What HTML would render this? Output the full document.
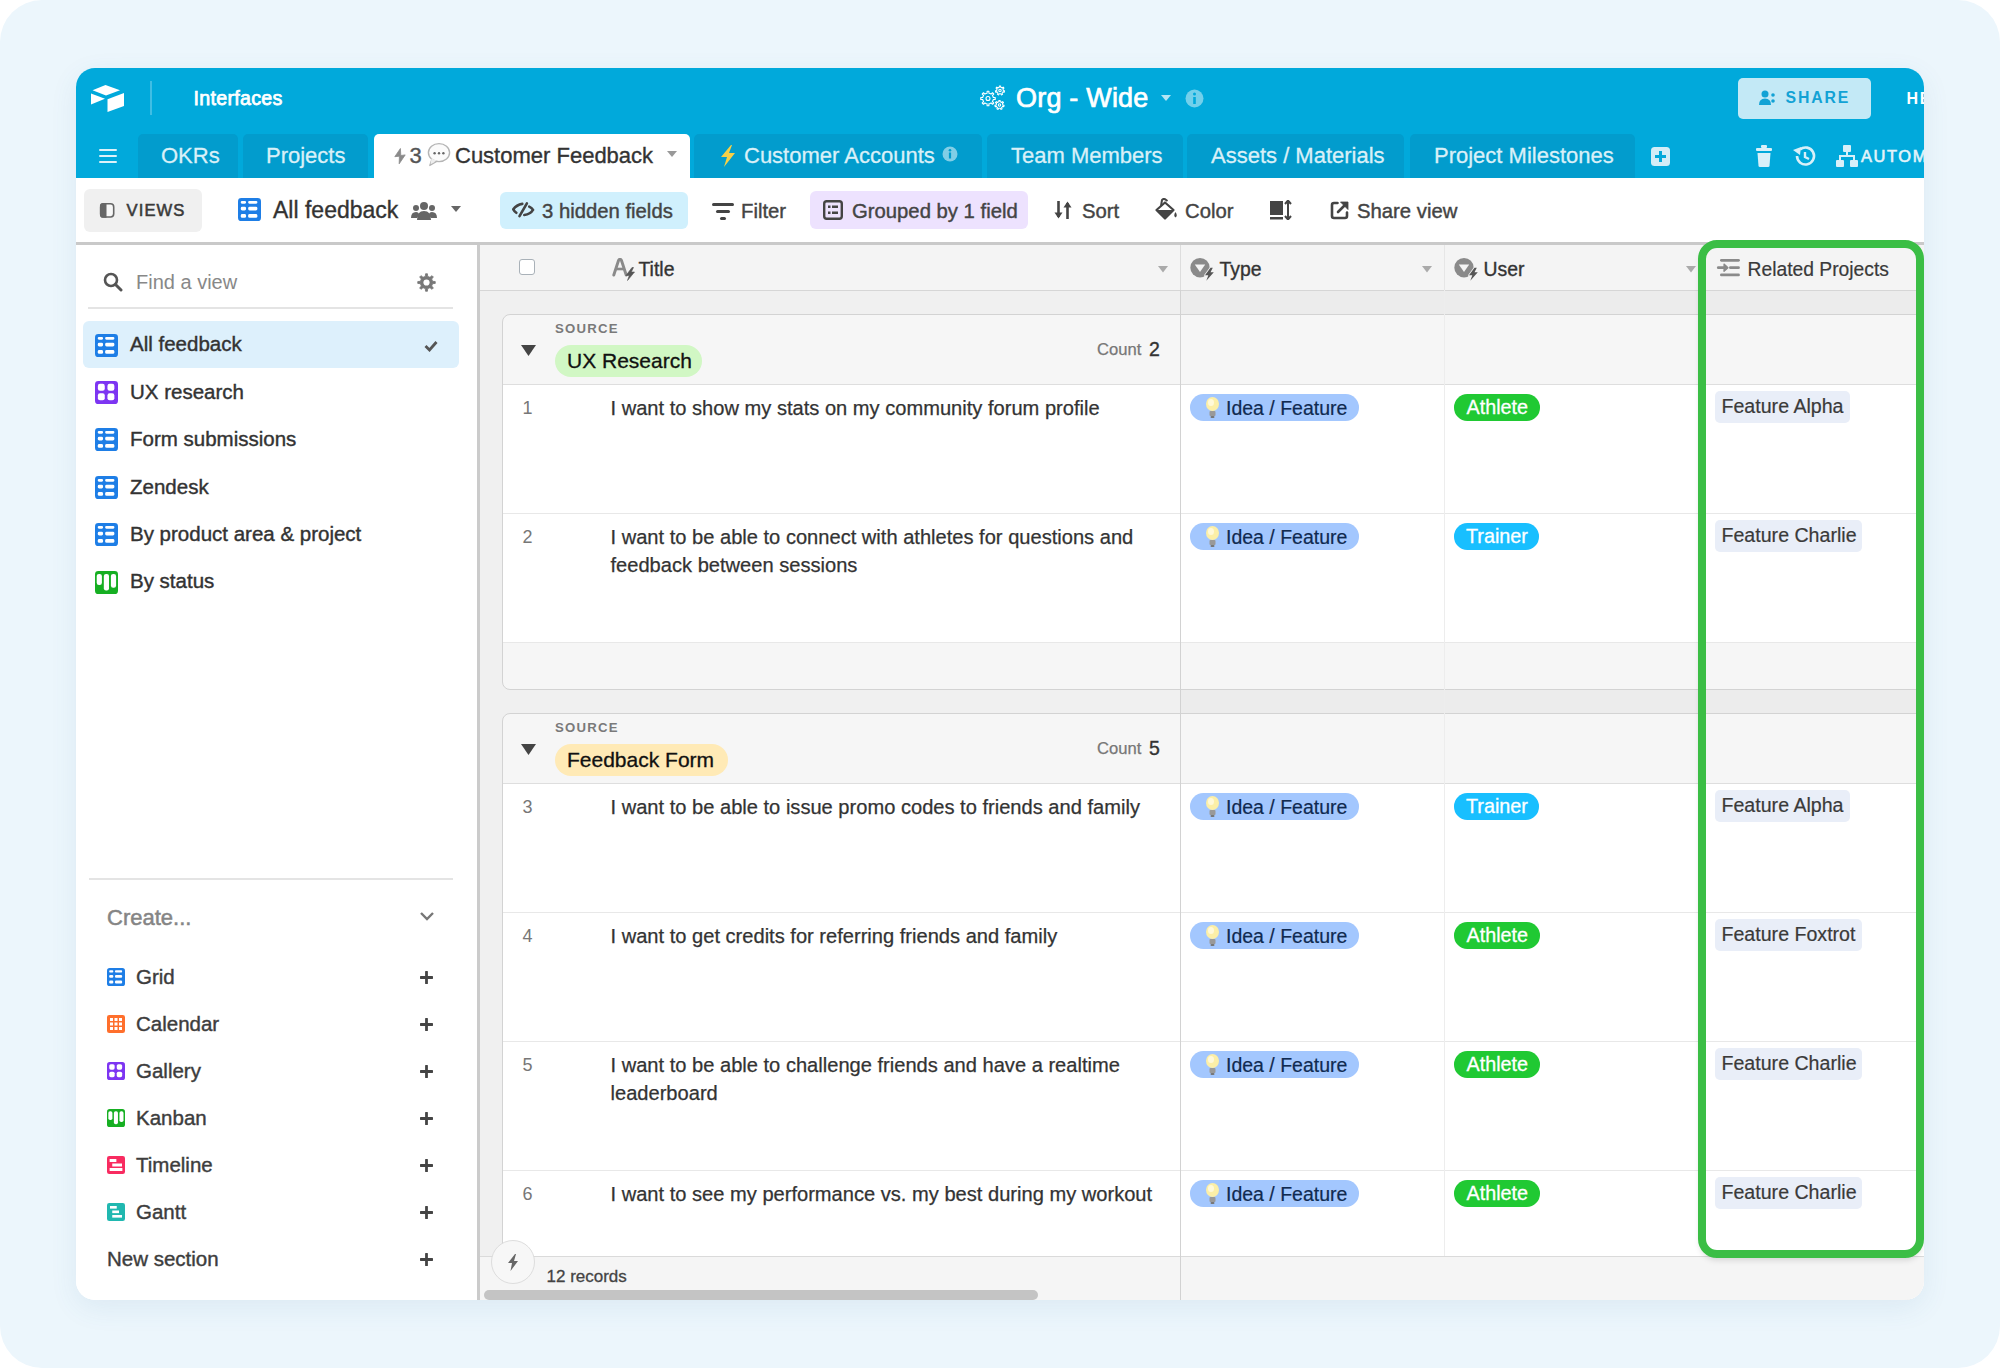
<!DOCTYPE html>
<html><head><meta charset="utf-8"><style>
html,body{margin:0;padding:0;background:#fff;}
body{width:2000px;height:1368px;position:relative;overflow:hidden;font-family:"Liberation Sans", sans-serif;}
.bg{position:absolute;left:0;top:0;width:2000px;height:1368px;background:#ECF6FC;border-radius:42px;}
.win{position:absolute;left:76px;top:68px;width:1848px;height:1232px;border-radius:19px;overflow:hidden;box-shadow:0 8px 28px rgba(60,110,150,0.09);background:#fff;}
.in{position:absolute;left:-76px;top:-68px;width:2000px;height:1368px;}
.t{position:absolute;white-space:nowrap;}
</style></head><body>
<div class="bg"></div>
<div class="win"><div class="in">
<div style="position:absolute;left:76px;top:68px;width:1848px;height:110px;background:#01A9DB;"></div>
<svg style="position:absolute;left:91px;top:84px;" width="34" height="28" viewBox="0 0 34 28"><path d="M14.5 1 L29 6.2 L15 11.5 L1.5 6.2 Z" fill="#fff"/><path d="M0 9.5 L14 14.8 L0 20.5 Z" fill="#fff"/><path d="M16.5 15.2 L33 9 L33 22 L16.5 28 Z" fill="#fff"/></svg>
<div style="position:absolute;left:150px;top:81px;width:2px;height:34px;background:rgba(255,255,255,0.25);"></div>
<div class="t" style="left:193.50px;top:89.11px;font-size:19.6px;line-height:19.6px;color:#fff;font-weight:400;letter-spacing:0.3px;-webkit-text-stroke:0.75px #fff;">Interfaces</div>
<svg style="position:absolute;left:980px;top:85px;" width="26" height="25" viewBox="0 0 26 25"><g fill="none" stroke="#fff" stroke-width="1.1" stroke-linejoin="round"><path d="M5.93 8.51 L7.05 8.18 L7.10 6.26 L8.90 6.26 L8.95 8.18 L10.07 8.51 L11.09 9.07 L12.49 7.74 L13.76 9.01 L12.43 10.41 L12.99 11.43 L13.32 12.55 L15.24 12.60 L15.24 14.40 L13.32 14.45 L12.99 15.57 L12.43 16.59 L13.76 17.99 L12.49 19.26 L11.09 17.93 L10.07 18.49 L8.95 18.82 L8.90 20.74 L7.10 20.74 L7.05 18.82 L5.93 18.49 L4.91 17.93 L3.51 19.26 L2.24 17.99 L3.57 16.59 L3.01 15.57 L2.68 14.45 L0.76 14.40 L0.76 12.60 L2.68 12.55 L3.01 11.43 L3.57 10.41 L2.24 9.01 L3.51 7.74 L4.91 9.07 Z"/><circle cx="8" cy="13.5" r="2"/><path d="M18.57 2.53 L19.34 2.27 L19.35 0.95 L20.65 0.95 L20.66 2.27 L21.43 2.53 L22.11 2.97 L23.16 2.15 L23.96 3.17 L22.94 4.00 L23.22 4.77 L23.30 5.57 L24.58 5.88 L24.30 7.15 L23.00 6.86 L22.58 7.56 L22.00 8.13 L22.56 9.32 L21.39 9.88 L20.81 8.70 L20.00 8.80 L19.19 8.70 L18.61 9.88 L17.44 9.32 L18.00 8.13 L17.42 7.56 L17.00 6.86 L15.70 7.15 L15.42 5.88 L16.70 5.57 L16.78 4.77 L17.06 4.00 L16.04 3.17 L16.84 2.15 L17.89 2.97 Z"/><circle cx="20" cy="5.5" r="1.2"/><path d="M18.07 17.03 L18.84 16.77 L18.85 15.45 L20.15 15.45 L20.16 16.77 L20.93 17.03 L21.61 17.47 L22.66 16.65 L23.46 17.67 L22.44 18.50 L22.72 19.27 L22.80 20.07 L24.08 20.38 L23.80 21.65 L22.50 21.36 L22.08 22.06 L21.50 22.63 L22.06 23.82 L20.89 24.38 L20.31 23.20 L19.50 23.30 L18.69 23.20 L18.11 24.38 L16.94 23.82 L17.50 22.63 L16.92 22.06 L16.50 21.36 L15.20 21.65 L14.92 20.38 L16.20 20.07 L16.28 19.27 L16.56 18.50 L15.54 17.67 L16.34 16.65 L17.39 17.47 Z"/><circle cx="19.5" cy="20" r="1.2"/></g></svg>
<div class="t" style="left:1016.00px;top:85.44px;font-size:27px;line-height:27px;color:#fff;font-weight:400;letter-spacing:0.2px;-webkit-text-stroke:0.7px #fff;">Org - Wide</div>
<svg style="position:absolute;left:1161px;top:95px;" width="10" height="7" viewBox="0 0 10 7"><path d="M0 0 L10 0 L5 6 Z" fill="rgba(255,255,255,0.7)"/></svg>
<svg style="position:absolute;left:1185px;top:89px;" width="19" height="19" viewBox="0 0 19 19"><circle cx="9.5" cy="9.5" r="9" fill="rgba(255,255,255,0.45)"/><rect x="8.2" y="8" width="2.6" height="7" fill="#01A9DB"/><circle cx="9.5" cy="5" r="1.5" fill="#01A9DB"/></svg>
<div style="position:absolute;left:1738px;top:78px;width:133px;height:40.5px;background:#C3E9F6;border-radius:5px;"></div>
<svg style="position:absolute;left:1759px;top:90px;" width="18" height="16" viewBox="0 0 18 16"><circle cx="6" cy="4" r="3.5" fill="#12A2D5"/><path d="M0 15 Q0 8.5 6 8.5 Q12 8.5 12 15 Z" fill="#12A2D5"/><circle cx="14" cy="5" r="1.8" fill="#12A2D5"/><circle cx="14" cy="11" r="1.8" fill="#12A2D5"/></svg>
<div class="t" style="left:1785.50px;top:90.43px;font-size:15.8px;line-height:15.8px;color:#12A2D5;font-weight:700;letter-spacing:1.9px;">SHARE</div>
<div class="t" style="left:1906.50px;top:91.26px;font-size:16px;line-height:16px;color:#fff;font-weight:700;letter-spacing:1.8px;">HE</div>
<div style="position:absolute;left:99px;top:149.2px;width:17.5px;height:2.3px;background:#DDF2F9;border-radius:1.2px;"></div>
<div style="position:absolute;left:99px;top:155.1px;width:17.5px;height:2.3px;background:#DDF2F9;border-radius:1.2px;"></div>
<div style="position:absolute;left:99px;top:161.0px;width:17.5px;height:2.3px;background:#DDF2F9;border-radius:1.2px;"></div>
<div style="position:absolute;left:138px;top:134px;width:100px;height:44px;background:#029CCD;border-radius:5px 5px 0 0;"></div>
<div style="position:absolute;left:243px;top:134px;width:125px;height:44px;background:#029CCD;border-radius:5px 5px 0 0;"></div>
<div style="position:absolute;left:374px;top:134px;width:316px;height:44px;background:#fff;border-radius:5px 5px 0 0;"></div>
<div style="position:absolute;left:694px;top:134px;width:288px;height:44px;background:#029CCD;border-radius:5px 5px 0 0;"></div>
<div style="position:absolute;left:987px;top:134px;width:196px;height:44px;background:#029CCD;border-radius:5px 5px 0 0;"></div>
<div style="position:absolute;left:1187px;top:134px;width:217px;height:44px;background:#029CCD;border-radius:5px 5px 0 0;"></div>
<div style="position:absolute;left:1410px;top:134px;width:225px;height:44px;background:#029CCD;border-radius:5px 5px 0 0;"></div>
<div class="t" style="left:161.00px;top:144.68px;font-size:22px;line-height:22px;color:#D9F0F8;font-weight:400;letter-spacing:0px;-webkit-text-stroke:0.3px #D9F0F8;">OKRs</div>
<div class="t" style="left:266.00px;top:144.68px;font-size:22px;line-height:22px;color:#D9F0F8;font-weight:400;letter-spacing:0px;-webkit-text-stroke:0.3px #D9F0F8;">Projects</div>
<svg style="position:absolute;left:394px;top:148px;" width="12" height="17" viewBox="0 0 12 17"><path d="M6.4 0.5 L0.8 8.7 L5.4 8.2 L5.2 15.8 L11.2 6.9 L6.8 7.5 Z" fill="#8a8a8a" stroke="#8a8a8a" stroke-width="0.8" stroke-linejoin="round"/></svg>
<div class="t" style="left:409.50px;top:144.68px;font-size:22px;line-height:22px;color:#555;font-weight:400;letter-spacing:0px;-webkit-text-stroke:0.4px #555;">3</div>
<svg style="position:absolute;left:427px;top:142px;" width="24" height="25" viewBox="0 0 24 25"><path d="M5 17 L2.8 23.5 L10.5 19" fill="#eee" stroke="#b5b5b5" stroke-width="1.3" stroke-linejoin="round"/><ellipse cx="12" cy="10.6" rx="10.6" ry="9" fill="#fbfbfb" stroke="#b5b5b5" stroke-width="1.4"/><path d="M4.5 16.5 L3.5 22 L9.5 18.5 Z" fill="#eee"/><circle cx="7.6" cy="11.2" r="1.2" fill="#666"/><circle cx="12" cy="11.2" r="1.2" fill="#666"/><circle cx="16.4" cy="11.2" r="1.2" fill="#666"/></svg>
<div class="t" style="left:455.00px;top:144.68px;font-size:22px;line-height:22px;color:#333;font-weight:400;letter-spacing:0px;-webkit-text-stroke:0.35px #333;">Customer Feedback</div>
<svg style="position:absolute;left:667px;top:151px;" width="10" height="7" viewBox="0 0 10 7"><path d="M0 0 L10 0 L5 6 Z" fill="#999"/></svg>
<svg style="position:absolute;left:720px;top:145px;" width="16" height="22" viewBox="0 0 16 22"><path d="M11 0 L1 12 L7 12 L4 22 L15 8 L9 8 L12 0 Z" fill="#F7D046"/></svg>
<div class="t" style="left:744.00px;top:144.68px;font-size:22px;line-height:22px;color:#D9F0F8;font-weight:400;letter-spacing:0px;-webkit-text-stroke:0.3px #D9F0F8;">Customer Accounts</div>
<svg style="position:absolute;left:942px;top:146px;" width="16" height="16" viewBox="0 0 16 16"><circle cx="8" cy="8" r="7.5" fill="rgba(255,255,255,0.5)"/><rect x="6.9" y="6.5" width="2.2" height="6" fill="#029CCD"/><circle cx="8" cy="4.2" r="1.3" fill="#029CCD"/></svg>
<div class="t" style="left:1011.00px;top:144.68px;font-size:22px;line-height:22px;color:#D9F0F8;font-weight:400;letter-spacing:0px;-webkit-text-stroke:0.3px #D9F0F8;">Team Members</div>
<div class="t" style="left:1211.00px;top:144.68px;font-size:22px;line-height:22px;color:#D9F0F8;font-weight:400;letter-spacing:0px;-webkit-text-stroke:0.3px #D9F0F8;">Assets / Materials</div>
<div class="t" style="left:1434.00px;top:144.68px;font-size:22px;line-height:22px;color:#D9F0F8;font-weight:400;letter-spacing:0px;-webkit-text-stroke:0.3px #D9F0F8;">Project Milestones</div>
<svg style="position:absolute;left:1651px;top:147px;" width="19" height="19" viewBox="0 0 19 19"><rect x="0" y="0" width="19" height="19" rx="3.5" fill="#D3EDF7"/><rect x="8" y="4" width="3" height="11" fill="#01A9DB"/><rect x="4" y="8" width="11" height="3" fill="#01A9DB"/></svg>
<svg style="position:absolute;left:1756px;top:145px;" width="16" height="22" viewBox="0 0 16 22"><rect x="5" y="0" width="6" height="3" rx="1" fill="#D8F0F9"/><rect x="0" y="3" width="16" height="3" rx="1" fill="#D8F0F9"/><path d="M1.5 8 L14.5 8 L13.5 21 Q13.4 22 12 22 L4 22 Q2.6 22 2.5 21 Z" fill="#D8F0F9"/></svg>
<svg style="position:absolute;left:1792px;top:144px;" width="25" height="24" viewBox="0 0 25 24"><path d="M5 12 A8.5 8.5 0 1 0 8 5.5" fill="none" stroke="#D8F0F9" stroke-width="2.6"/><path d="M1 6 L9 3 L8 11 Z" fill="#D8F0F9"/><path d="M13 8 L13 13 L17 15" fill="none" stroke="#D8F0F9" stroke-width="2.4"/></svg>
<svg style="position:absolute;left:1836px;top:145px;" width="22" height="22" viewBox="0 0 22 22"><rect x="7" y="0" width="8" height="7" rx="1" fill="#D8F0F9"/><rect x="0" y="15" width="8" height="7" rx="1" fill="#D8F0F9"/><rect x="14" y="15" width="8" height="7" rx="1" fill="#D8F0F9"/><path d="M11 7 L11 11 M4 15 L4 11 L18 11 L18 15" fill="none" stroke="#D8F0F9" stroke-width="2"/></svg>
<div class="t" style="left:1861.00px;top:147.82px;font-size:16.4px;line-height:16.4px;color:#E3F4FA;font-weight:400;letter-spacing:1.6px;-webkit-text-stroke:0.6px #E3F4FA;">AUTOMATIONS</div>
<div style="position:absolute;left:76px;top:178px;width:1848px;height:64px;background:#fff;"></div>
<div style="position:absolute;left:76px;top:242px;width:1848px;height:3px;background:#C9C9C9;"></div>
<div style="position:absolute;left:84px;top:189px;width:118px;height:43px;background:#F0F0F0;border-radius:6px;"></div>
<svg style="position:absolute;left:99px;top:203px;" width="16" height="15" viewBox="0 0 16 15"><rect x="1.7" y="0.8" width="13" height="13.2" rx="3.2" fill="#f7f7f7" stroke="#666" stroke-width="1.6"/><path d="M4 0 L7.5 0 L7.5 14.8 L4 14.8 Q0.9 14.8 0.9 11.7 L0.9 3.1 Q0.9 0 4 0 Z" fill="#666"/></svg>
<div class="t" style="left:126.50px;top:202.95px;font-size:16.6px;line-height:16.6px;color:#3a3a3a;font-weight:400;letter-spacing:1.1px;-webkit-text-stroke:0.55px #3a3a3a;">VIEWS</div>
<svg style="position:absolute;left:238px;top:198px;" width="23" height="23" viewBox="0 0 24 24"><rect x="0" y="0" width="24" height="24" rx="3.5" fill="#1E7EE6"/><g fill="#fff"><rect x="2.9" y="3.1" width="5.5" height="2.8" rx="1.2"/><rect x="10.6" y="3.1" width="9.6" height="2.8" rx="1.2"/><rect x="2.9" y="9.2" width="5.5" height="3.9" rx="1.5"/><rect x="10.6" y="9.2" width="9.6" height="3.9" rx="1.5"/><rect x="2.9" y="16.7" width="5.5" height="4" rx="1.5"/><rect x="10.6" y="16.7" width="9.6" height="4" rx="1.5"/></g></svg>
<div class="t" style="left:273.00px;top:199.28px;font-size:23px;line-height:23px;color:#333;font-weight:400;letter-spacing:0px;-webkit-text-stroke:0.35px #333;">All feedback</div>
<svg style="position:absolute;left:411px;top:201px;" width="26" height="19" viewBox="0 0 26 19"><circle cx="13" cy="5" r="4" fill="#666"/><circle cx="5" cy="7" r="3" fill="#666"/><circle cx="21" cy="7" r="3" fill="#666"/><path d="M6 19 Q6 10 13 10 Q20 10 20 19 Z" fill="#666"/><path d="M0 17 Q0 11 5 11 Q8 11 8 14 L6 17 Z" fill="#666"/><path d="M26 17 Q26 11 21 11 Q18 11 18 14 L20 17 Z" fill="#666"/></svg>
<svg style="position:absolute;left:451px;top:206px;" width="10" height="7" viewBox="0 0 10 7"><path d="M0 0 L10 0 L5 6 Z" fill="#666"/></svg>
<div style="position:absolute;left:500px;top:192px;width:188px;height:37px;background:#D0F0FD;border-radius:6px;"></div>
<svg style="position:absolute;left:512px;top:201px;" width="23" height="18" viewBox="0 0 23 18"><g fill="none" stroke="#444" stroke-width="2.6" stroke-linecap="round"><path d="M10.3 2.9 Q4.5 3.8 1.3 8.3 Q2.4 10.4 4.3 11.8"/><path d="M14.9 2.3 L7.5 15.2"/><path d="M17.2 5.6 Q20 7 21 8.9 Q18.5 13.2 12.3 14"/></g></svg>
<div class="t" style="left:542.00px;top:201.42px;font-size:20.3px;line-height:20.3px;color:#444;font-weight:400;letter-spacing:0px;-webkit-text-stroke:0.4px #444;">3 hidden fields</div>
<svg style="position:absolute;left:712px;top:202px;" width="22" height="18" viewBox="0 0 22 18"><rect x="0" y="1" width="22" height="3" rx="1.5" fill="#444"/><rect x="4" y="8" width="14" height="3" rx="1.5" fill="#444"/><rect x="8" y="15" width="6" height="3" rx="1.5" fill="#444"/></svg>
<div class="t" style="left:741.00px;top:201.42px;font-size:20.3px;line-height:20.3px;color:#444;font-weight:400;letter-spacing:0px;-webkit-text-stroke:0.4px #444;">Filter</div>
<div style="position:absolute;left:810px;top:191px;width:218px;height:38px;background:#EDE2FE;border-radius:6px;"></div>
<svg style="position:absolute;left:823px;top:200px;" width="20" height="20" viewBox="0 0 20 20"><rect x="1.2" y="1.2" width="17.6" height="17.6" rx="2.5" fill="none" stroke="#444" stroke-width="2.4"/><rect x="5" y="5.5" width="2.5" height="2.5" fill="#444"/><rect x="9" y="5.5" width="6" height="2.5" fill="#444"/><rect x="5" y="11.5" width="2.5" height="2.5" fill="#444"/><rect x="9" y="11.5" width="6" height="2.5" fill="#444"/></svg>
<div class="t" style="left:852.00px;top:201.42px;font-size:20.3px;line-height:20.3px;color:#444;font-weight:400;letter-spacing:0px;-webkit-text-stroke:0.4px #444;">Grouped by 1 field</div>
<svg style="position:absolute;left:1054px;top:200px;" width="19" height="20" viewBox="0 0 19 20"><path d="M4.5 1 L4.5 17" stroke="#444" stroke-width="2.6"/><path d="M0.5 12.5 L4.5 18.5 L8.5 12.5 Z" fill="#444"/><path d="M13.5 19 L13.5 3" stroke="#444" stroke-width="2.6"/><path d="M9.5 7.5 L13.5 1.5 L17.5 7.5 Z" fill="#444"/></svg>
<div class="t" style="left:1082.00px;top:201.42px;font-size:20.3px;line-height:20.3px;color:#444;font-weight:400;letter-spacing:0px;-webkit-text-stroke:0.4px #444;">Sort</div>
<svg style="position:absolute;left:1155px;top:198px;" width="23" height="22" viewBox="0 0 23 22"><path d="M10 4.5 L18.5 12 L10 20.5 L1.5 12 Z" fill="none" stroke="#444" stroke-width="2.2" stroke-linejoin="round"/><path d="M1.5 12 L18.5 12 L10 20.5 Z" fill="#444"/><path d="M6 8 L7 2 Q8 0.5 10 1.2 L12.5 3" fill="none" stroke="#444" stroke-width="2"/><path d="M20.5 14 Q23 18 20.5 19.5 Q18 18 20.5 14 Z" fill="#444"/></svg>
<div class="t" style="left:1185.00px;top:201.42px;font-size:20.3px;line-height:20.3px;color:#444;font-weight:400;letter-spacing:0px;-webkit-text-stroke:0.4px #444;">Color</div>
<svg style="position:absolute;left:1270px;top:200px;" width="22" height="20" viewBox="0 0 22 20"><rect x="0" y="1" width="13" height="14" fill="#444"/><rect x="0" y="17" width="13" height="2.5" fill="#444"/><path d="M18 1 L18 19 M15 4 L18 0.5 L21 4 M15 16 L18 19.5 L21 16" fill="none" stroke="#444" stroke-width="2"/></svg>
<svg style="position:absolute;left:1330px;top:201px;" width="19" height="19" viewBox="0 0 19 19"><path d="M7.5 2 L4 2 Q2 2 2 4 L2 15 Q2 17 4 17 L15 17 Q17 17 17 15 L17 11.5" fill="none" stroke="#444" stroke-width="2.6" stroke-linecap="round"/><path d="M8 11 L14.5 4.5" stroke="#444" stroke-width="2.6" stroke-linecap="round"/><path d="M10.5 1 L18 1 L18 8.5 Z" fill="#444" stroke="#444" stroke-width="0.8" stroke-linejoin="round"/></svg>
<div class="t" style="left:1357.00px;top:201.42px;font-size:20.3px;line-height:20.3px;color:#444;font-weight:400;letter-spacing:0px;-webkit-text-stroke:0.4px #444;">Share view</div>
<div style="position:absolute;left:76px;top:245px;width:401px;height:1055px;background:#fff;"></div>
<div style="position:absolute;left:477px;top:245px;width:2.5px;height:1055px;background:#CBCBCB;"></div>
<svg style="position:absolute;left:103px;top:272px;" width="20" height="20" viewBox="0 0 20 20"><circle cx="8" cy="8" r="6" fill="none" stroke="#555" stroke-width="2.6"/><path d="M12.5 12.5 L18 18" stroke="#555" stroke-width="3" stroke-linecap="round"/></svg>
<div class="t" style="left:136.00px;top:272.47px;font-size:20px;line-height:20px;color:#888;font-weight:400;letter-spacing:0px;">Find a view</div>
<svg style="position:absolute;left:417px;top:273px;" width="19" height="19" viewBox="0 0 19 19"><path d="M7.13 3.77 L8.29 3.42 L8.55 0.75 L10.45 0.75 L10.71 3.42 L11.87 3.77 L12.94 4.34 L15.02 2.64 L16.36 3.98 L14.66 6.06 L15.23 7.13 L15.58 8.29 L18.25 8.55 L18.25 10.45 L15.58 10.71 L15.23 11.87 L14.66 12.94 L16.36 15.02 L15.02 16.36 L12.94 14.66 L11.87 15.23 L10.71 15.58 L10.45 18.25 L8.55 18.25 L8.29 15.58 L7.13 15.23 L6.06 14.66 L3.98 16.36 L2.64 15.02 L4.34 12.94 L3.77 11.87 L3.42 10.71 L0.75 10.45 L0.75 8.55 L3.42 8.29 L3.77 7.13 L4.34 6.06 L2.64 3.98 L3.98 2.64 L6.06 4.34 Z" fill="#777" stroke="#777" stroke-width="0.8" stroke-linejoin="round"/><circle cx="9.5" cy="9.5" r="3.1" fill="#fff"/></svg>
<div style="position:absolute;left:88px;top:307px;width:365px;height:2px;background:#E4E4E4;"></div>
<div style="position:absolute;left:83px;top:321px;width:376px;height:47px;background:#DDF0FC;border-radius:6px;"></div>
<svg style="position:absolute;left:95px;top:333.5px;" width="23" height="23" viewBox="0 0 24 24"><rect x="0" y="0" width="24" height="24" rx="3.5" fill="#1E7EE6"/><g fill="#fff"><rect x="2.9" y="3.1" width="5.5" height="2.8" rx="1.2"/><rect x="10.6" y="3.1" width="9.6" height="2.8" rx="1.2"/><rect x="2.9" y="9.2" width="5.5" height="3.9" rx="1.5"/><rect x="10.6" y="9.2" width="9.6" height="3.9" rx="1.5"/><rect x="2.9" y="16.7" width="5.5" height="4" rx="1.5"/><rect x="10.6" y="16.7" width="9.6" height="4" rx="1.5"/></g></svg>
<div class="t" style="left:130.00px;top:334.45px;font-size:20.5px;line-height:20.5px;color:#333;font-weight:400;letter-spacing:0px;-webkit-text-stroke:0.4px #333;">All feedback</div>
<svg style="position:absolute;left:95px;top:380.9px;" width="23" height="23" viewBox="0 0 24 24"><rect x="0" y="0" width="24" height="24" rx="3.5" fill="#7D35F2"/><g fill="#fff"><rect x="3" y="2.9" width="7.2" height="7.3" rx="2.2"/><rect x="13" y="2.9" width="7.2" height="7.3" rx="2.2"/><rect x="3" y="12.9" width="7.2" height="7.3" rx="2.2"/><rect x="13" y="12.9" width="7.2" height="7.3" rx="2.2"/></g></svg>
<div class="t" style="left:130.00px;top:381.85px;font-size:20.5px;line-height:20.5px;color:#333;font-weight:400;letter-spacing:0px;-webkit-text-stroke:0.4px #333;">UX research</div>
<svg style="position:absolute;left:95px;top:428.3px;" width="23" height="23" viewBox="0 0 24 24"><rect x="0" y="0" width="24" height="24" rx="3.5" fill="#1E7EE6"/><g fill="#fff"><rect x="2.9" y="3.1" width="5.5" height="2.8" rx="1.2"/><rect x="10.6" y="3.1" width="9.6" height="2.8" rx="1.2"/><rect x="2.9" y="9.2" width="5.5" height="3.9" rx="1.5"/><rect x="10.6" y="9.2" width="9.6" height="3.9" rx="1.5"/><rect x="2.9" y="16.7" width="5.5" height="4" rx="1.5"/><rect x="10.6" y="16.7" width="9.6" height="4" rx="1.5"/></g></svg>
<div class="t" style="left:130.00px;top:429.25px;font-size:20.5px;line-height:20.5px;color:#333;font-weight:400;letter-spacing:0px;-webkit-text-stroke:0.4px #333;">Form submissions</div>
<svg style="position:absolute;left:95px;top:475.7px;" width="23" height="23" viewBox="0 0 24 24"><rect x="0" y="0" width="24" height="24" rx="3.5" fill="#1E7EE6"/><g fill="#fff"><rect x="2.9" y="3.1" width="5.5" height="2.8" rx="1.2"/><rect x="10.6" y="3.1" width="9.6" height="2.8" rx="1.2"/><rect x="2.9" y="9.2" width="5.5" height="3.9" rx="1.5"/><rect x="10.6" y="9.2" width="9.6" height="3.9" rx="1.5"/><rect x="2.9" y="16.7" width="5.5" height="4" rx="1.5"/><rect x="10.6" y="16.7" width="9.6" height="4" rx="1.5"/></g></svg>
<div class="t" style="left:130.00px;top:476.65px;font-size:20.5px;line-height:20.5px;color:#333;font-weight:400;letter-spacing:0px;-webkit-text-stroke:0.4px #333;">Zendesk</div>
<svg style="position:absolute;left:95px;top:523.1px;" width="23" height="23" viewBox="0 0 24 24"><rect x="0" y="0" width="24" height="24" rx="3.5" fill="#1E7EE6"/><g fill="#fff"><rect x="2.9" y="3.1" width="5.5" height="2.8" rx="1.2"/><rect x="10.6" y="3.1" width="9.6" height="2.8" rx="1.2"/><rect x="2.9" y="9.2" width="5.5" height="3.9" rx="1.5"/><rect x="10.6" y="9.2" width="9.6" height="3.9" rx="1.5"/><rect x="2.9" y="16.7" width="5.5" height="4" rx="1.5"/><rect x="10.6" y="16.7" width="9.6" height="4" rx="1.5"/></g></svg>
<div class="t" style="left:130.00px;top:524.05px;font-size:20.5px;line-height:20.5px;color:#333;font-weight:400;letter-spacing:0px;-webkit-text-stroke:0.4px #333;">By product area &amp; project</div>
<svg style="position:absolute;left:95px;top:570.5px;" width="23" height="23" viewBox="0 0 24 24"><rect x="0" y="0" width="24" height="24" rx="3.5" fill="#16AF22"/><g fill="#fff"><rect x="1.8" y="3" width="5.4" height="11.6" rx="2.3"/><rect x="9.2" y="3" width="5.4" height="17.4" rx="2.3"/><rect x="16.6" y="3" width="5.4" height="14.4" rx="2.3"/></g></svg>
<div class="t" style="left:130.00px;top:571.45px;font-size:20.5px;line-height:20.5px;color:#333;font-weight:400;letter-spacing:0px;-webkit-text-stroke:0.4px #333;">By status</div>
<svg style="position:absolute;left:424px;top:340px;" width="14" height="12" viewBox="0 0 14 12"><path d="M1.5 6 L5.5 10 L12.5 2" fill="none" stroke="#555" stroke-width="2.8"/></svg>
<div style="position:absolute;left:89px;top:878px;width:364px;height:2px;background:#E4E4E4;"></div>
<div class="t" style="left:107.00px;top:907.38px;font-size:22px;line-height:22px;color:#858585;font-weight:400;letter-spacing:0px;-webkit-text-stroke:0.5px #858585;">Create...</div>
<svg style="position:absolute;left:419px;top:911px;" width="16" height="11" viewBox="0 0 16 11"><path d="M2 2 L8 8 L14 2" fill="none" stroke="#777" stroke-width="2.4"/></svg>
<svg style="position:absolute;left:106.5px;top:968px;" width="18" height="18" viewBox="0 0 24 24"><rect x="0" y="0" width="24" height="24" rx="3.5" fill="#1E7EE6"/><g fill="#fff"><rect x="2.9" y="3.1" width="5.5" height="2.8" rx="1.2"/><rect x="10.6" y="3.1" width="9.6" height="2.8" rx="1.2"/><rect x="2.9" y="9.2" width="5.5" height="3.9" rx="1.5"/><rect x="10.6" y="9.2" width="9.6" height="3.9" rx="1.5"/><rect x="2.9" y="16.7" width="5.5" height="4" rx="1.5"/><rect x="10.6" y="16.7" width="9.6" height="4" rx="1.5"/></g></svg>
<div class="t" style="left:136.00px;top:967.15px;font-size:20.5px;line-height:20.5px;color:#3d3d3d;font-weight:400;letter-spacing:0px;-webkit-text-stroke:0.4px #3d3d3d;">Grid</div>
<svg style="position:absolute;left:420px;top:970.5px;" width="13" height="13" viewBox="0 0 13 13"><rect x="5.1" y="0" width="2.8" height="13" rx="0.6" fill="#444"/><rect x="0" y="5.1" width="13" height="2.8" rx="0.6" fill="#444"/></svg>
<svg style="position:absolute;left:106.5px;top:1015px;" width="18" height="18" viewBox="0 0 24 24"><rect x="0" y="0" width="24" height="24" rx="3" fill="#FF6F2C"/><rect x="4" y="4" width="4" height="4" fill="#fff"/><rect x="10" y="4" width="4" height="4" fill="#fff"/><rect x="16" y="4" width="4" height="4" fill="#fff"/><rect x="4" y="10" width="4" height="4" fill="#fff"/><rect x="10" y="10" width="4" height="4" fill="#fff"/><rect x="16" y="10" width="4" height="4" fill="#fff"/><rect x="4" y="16" width="4" height="4" fill="#fff"/><rect x="10" y="16" width="4" height="4" fill="#fff"/><rect x="16" y="16" width="4" height="4" fill="#fff"/></svg>
<div class="t" style="left:136.00px;top:1014.15px;font-size:20.5px;line-height:20.5px;color:#3d3d3d;font-weight:400;letter-spacing:0px;-webkit-text-stroke:0.4px #3d3d3d;">Calendar</div>
<svg style="position:absolute;left:420px;top:1017.5px;" width="13" height="13" viewBox="0 0 13 13"><rect x="5.1" y="0" width="2.8" height="13" rx="0.6" fill="#444"/><rect x="0" y="5.1" width="13" height="2.8" rx="0.6" fill="#444"/></svg>
<svg style="position:absolute;left:106.5px;top:1062px;" width="18" height="18" viewBox="0 0 24 24"><rect x="0" y="0" width="24" height="24" rx="3.5" fill="#7D35F2"/><g fill="#fff"><rect x="3" y="2.9" width="7.2" height="7.3" rx="2.2"/><rect x="13" y="2.9" width="7.2" height="7.3" rx="2.2"/><rect x="3" y="12.9" width="7.2" height="7.3" rx="2.2"/><rect x="13" y="12.9" width="7.2" height="7.3" rx="2.2"/></g></svg>
<div class="t" style="left:136.00px;top:1061.15px;font-size:20.5px;line-height:20.5px;color:#3d3d3d;font-weight:400;letter-spacing:0px;-webkit-text-stroke:0.4px #3d3d3d;">Gallery</div>
<svg style="position:absolute;left:420px;top:1064.5px;" width="13" height="13" viewBox="0 0 13 13"><rect x="5.1" y="0" width="2.8" height="13" rx="0.6" fill="#444"/><rect x="0" y="5.1" width="13" height="2.8" rx="0.6" fill="#444"/></svg>
<svg style="position:absolute;left:106.5px;top:1109px;" width="18" height="18" viewBox="0 0 24 24"><rect x="0" y="0" width="24" height="24" rx="3.5" fill="#16AF22"/><g fill="#fff"><rect x="1.8" y="3" width="5.4" height="11.6" rx="2.3"/><rect x="9.2" y="3" width="5.4" height="17.4" rx="2.3"/><rect x="16.6" y="3" width="5.4" height="14.4" rx="2.3"/></g></svg>
<div class="t" style="left:136.00px;top:1108.15px;font-size:20.5px;line-height:20.5px;color:#3d3d3d;font-weight:400;letter-spacing:0px;-webkit-text-stroke:0.4px #3d3d3d;">Kanban</div>
<svg style="position:absolute;left:420px;top:1111.5px;" width="13" height="13" viewBox="0 0 13 13"><rect x="5.1" y="0" width="2.8" height="13" rx="0.6" fill="#444"/><rect x="0" y="5.1" width="13" height="2.8" rx="0.6" fill="#444"/></svg>
<svg style="position:absolute;left:106.5px;top:1156px;" width="18" height="18" viewBox="0 0 24 24"><rect x="0" y="0" width="24" height="24" rx="3" fill="#F82B60"/><rect x="3.5" y="4" width="9" height="4" fill="#fff"/><rect x="7" y="10" width="13" height="4" fill="#fff"/><rect x="3.5" y="16" width="17" height="4" fill="#fff"/></svg>
<div class="t" style="left:136.00px;top:1155.15px;font-size:20.5px;line-height:20.5px;color:#3d3d3d;font-weight:400;letter-spacing:0px;-webkit-text-stroke:0.4px #3d3d3d;">Timeline</div>
<svg style="position:absolute;left:420px;top:1158.5px;" width="13" height="13" viewBox="0 0 13 13"><rect x="5.1" y="0" width="2.8" height="13" rx="0.6" fill="#444"/><rect x="0" y="5.1" width="13" height="2.8" rx="0.6" fill="#444"/></svg>
<svg style="position:absolute;left:106.5px;top:1203px;" width="18" height="18" viewBox="0 0 24 24"><rect x="0" y="0" width="24" height="24" rx="3" fill="#20B8B0"/><rect x="4" y="4" width="9" height="3.5" fill="#fff"/><rect x="7" y="10" width="9" height="3.5" fill="#fff"/><rect x="7" y="16" width="13" height="3.5" fill="#fff"/></svg>
<div class="t" style="left:136.00px;top:1202.15px;font-size:20.5px;line-height:20.5px;color:#3d3d3d;font-weight:400;letter-spacing:0px;-webkit-text-stroke:0.4px #3d3d3d;">Gantt</div>
<svg style="position:absolute;left:420px;top:1205.5px;" width="13" height="13" viewBox="0 0 13 13"><rect x="5.1" y="0" width="2.8" height="13" rx="0.6" fill="#444"/><rect x="0" y="5.1" width="13" height="2.8" rx="0.6" fill="#444"/></svg>
<div class="t" style="left:107.00px;top:1249.15px;font-size:20.5px;line-height:20.5px;color:#3d3d3d;font-weight:400;letter-spacing:0px;-webkit-text-stroke:0.4px #3d3d3d;">New section</div>
<svg style="position:absolute;left:420px;top:1252.5px;" width="13" height="13" viewBox="0 0 13 13"><rect x="5.1" y="0" width="2.8" height="13" rx="0.6" fill="#444"/><rect x="0" y="5.1" width="13" height="2.8" rx="0.6" fill="#444"/></svg>
<div style="position:absolute;left:479.5px;top:245px;width:1445px;height:1055px;background:#F0F0F0;"></div>
<div style="position:absolute;left:1181px;top:245px;width:745px;height:1055px;background:#ECECEC;"></div>
<div style="position:absolute;left:479.5px;top:245px;width:1445px;height:45px;background:#F4F4F4;"></div>
<div style="position:absolute;left:479.5px;top:290px;width:1445px;height:1px;background:#D6D6D6;"></div>
<div style="position:absolute;left:519px;top:259px;width:16px;height:16px;background:#fff;border:1.5px solid #A9B1B8;border-radius:3px;box-sizing:border-box;"></div>
<svg style="position:absolute;left:611px;top:258px;" width="25" height="23" viewBox="0 0 25 23"><path d="M2.8 17 L7.6 2.3 Q8 1.3 8.8 1.3 L9.2 1.3 Q10 1.3 10.4 2.3 L15.2 17" fill="none" stroke="#8a8a8a" stroke-width="2.9" stroke-linecap="round" stroke-linejoin="round"/><path d="M5.2 11 L12.8 11" stroke="#8a8a8a" stroke-width="2.6"/><path d="M21 9.5 L15 17.5 L18.3 17.5 L16.5 22.5 L23.5 14 L20.3 14 L22.5 9.5 Z" fill="#555" stroke="#555" stroke-width="0.6" stroke-linejoin="round"/></svg>
<div class="t" style="left:638.50px;top:259.58px;font-size:19.4px;line-height:19.4px;color:#333;font-weight:400;letter-spacing:0px;-webkit-text-stroke:0.35px #333;">Title</div>
<svg style="position:absolute;left:1158px;top:266px;" width="10" height="7" viewBox="0 0 10 7"><path d="M0 0 L10 0 L5 6.5 Z" fill="#aaa"/></svg>
<div style="position:absolute;left:1180px;top:245px;width:1px;height:1011px;background:#DDDDDD;"></div>
<svg style="position:absolute;left:1190px;top:258px;" width="25" height="23" viewBox="0 0 25 23"><circle cx="10" cy="9.7" r="9.7" fill="#8a8a8a"/><path d="M4.8 6.5 L15.2 6.5 L10 14 Z" fill="#F4F4F4"/><path d="M20.5 9.8 L15 17.3 L18.3 17.3 L16.3 22.8 L23.8 14.3 L20.5 14.3 L22.8 9.8 Z" fill="#555" stroke="#F4F4F4" stroke-width="1.6" stroke-linejoin="round" paint-order="stroke"/></svg>
<div class="t" style="left:1219.50px;top:259.58px;font-size:19.4px;line-height:19.4px;color:#333;font-weight:400;letter-spacing:0px;-webkit-text-stroke:0.35px #333;">Type</div>
<svg style="position:absolute;left:1422px;top:266px;" width="10" height="7" viewBox="0 0 10 7"><path d="M0 0 L10 0 L5 6.5 Z" fill="#aaa"/></svg>
<div style="position:absolute;left:1444px;top:245px;width:1px;height:1011px;background:#E6E6E6;"></div>
<svg style="position:absolute;left:1454px;top:258px;" width="25" height="23" viewBox="0 0 25 23"><circle cx="10" cy="9.7" r="9.7" fill="#8a8a8a"/><path d="M4.8 6.5 L15.2 6.5 L10 14 Z" fill="#F4F4F4"/><path d="M20.5 9.8 L15 17.3 L18.3 17.3 L16.3 22.8 L23.8 14.3 L20.5 14.3 L22.8 9.8 Z" fill="#555" stroke="#F4F4F4" stroke-width="1.6" stroke-linejoin="round" paint-order="stroke"/></svg>
<div class="t" style="left:1483.50px;top:259.58px;font-size:19.4px;line-height:19.4px;color:#333;font-weight:400;letter-spacing:0px;-webkit-text-stroke:0.35px #333;">User</div>
<svg style="position:absolute;left:1686px;top:266px;" width="10" height="7" viewBox="0 0 10 7"><path d="M0 0 L10 0 L5 6.5 Z" fill="#aaa"/></svg>
<svg style="position:absolute;left:1716px;top:257px;" width="24" height="20" viewBox="0 0 24 20"><g stroke="#8a8a8a" stroke-width="2.8" stroke-linecap="round" fill="none"><path d="M5.4 3.3 L22.5 3.3"/><path d="M14.4 10.7 L22.5 10.7"/><path d="M5.4 17.9 L22.5 17.9"/><path d="M2.3 10.7 L9 10.7"/></g><path d="M8 7 L12 10.7 L8 14.4 Z" fill="#8a8a8a" stroke="#8a8a8a" stroke-width="1.2" stroke-linejoin="round"/></svg>
<div class="t" style="left:1747.50px;top:259.66px;font-size:19.3px;line-height:19.3px;color:#3a3a3a;font-weight:400;letter-spacing:0px;-webkit-text-stroke:0.2px #3a3a3a;">Related Projects</div>
<div style="position:absolute;left:501.5px;top:314px;width:1500px;height:376px;background:#F6F6F6;border:1.8px solid #D3D3D3;border-radius:8px;box-sizing:border-box;"></div>
<div class="t" style="left:555.00px;top:332.15px;font-size:1px;line-height:1px;color:#333;font-weight:400;letter-spacing:0px;"></div>
<div class="t" style="left:555.00px;top:322.13px;font-size:13.2px;line-height:13.2px;color:#7a7a7a;font-weight:700;letter-spacing:1.25px;">SOURCE</div>
<svg style="position:absolute;left:521px;top:345px;" width="15" height="11" viewBox="0 0 15 11"><path d="M0 0 L15 0 L7.5 11 Z" fill="#444"/></svg>
<div style="position:absolute;left:555px;top:345px;width:147px;height:32px;background:#D1F7C4;border-radius:16px;"></div>
<div class="t" style="left:567.00px;top:349.72px;font-size:21px;line-height:21px;color:#111;font-weight:400;letter-spacing:0px;-webkit-text-stroke:0.3px #111;">UX Research</div>
<div class="t" style="left:1097.00px;top:341.95px;font-size:16.6px;line-height:16.6px;color:#777;font-weight:400;letter-spacing:0px;-webkit-text-stroke:0.25px #777;">Count</div>
<div class="t" style="left:1149.00px;top:339.99px;font-size:19.5px;line-height:19.5px;color:#333;font-weight:400;letter-spacing:0px;-webkit-text-stroke:0.35px #333;">2</div>
<div style="position:absolute;left:503px;top:384px;width:1440px;height:1px;background:#DEDEDE;"></div>
<div style="position:absolute;left:503px;top:385px;width:1440px;height:129px;background:#fff;"></div>
<div style="position:absolute;left:503px;top:513px;width:1440px;height:1px;background:#E8E8E8;"></div>
<div class="t" style="left:522.50px;top:399.46px;font-size:18px;line-height:18px;color:#777;font-weight:400;letter-spacing:0px;">1</div>
<div class="t" style="left:610.50px;top:397.99px;font-size:20.1px;line-height:20.1px;color:#333;font-weight:400;letter-spacing:0px;-webkit-text-stroke:0.25px #333;">I want to show my stats on my community forum profile</div>
<div style="position:absolute;left:1190px;top:394px;width:169px;height:26.5px;background:#A3C7FE;border-radius:13.25px;"></div>
<svg style="position:absolute;left:1205px;top:396px;" width="15" height="23" viewBox="0 0 15 23"><ellipse cx="7.5" cy="8" rx="6.5" ry="7" fill="#FCEFA7"/><ellipse cx="6" cy="6.5" rx="3" ry="3.5" fill="#FFF9D9"/><rect x="4.5" y="15" width="6" height="5" rx="1" fill="#999"/><rect x="5.5" y="20" width="4" height="2" rx="1" fill="#777"/></svg>
<div class="t" style="left:1226.00px;top:398.69px;font-size:19.5px;line-height:19.5px;color:#102A50;font-weight:400;letter-spacing:0px;-webkit-text-stroke:0.2px #102A50;">Idea / Feature</div>
<div style="position:absolute;left:1454px;top:394px;width:86px;height:26.5px;background:#20C933;border-radius:13.25px;"></div>
<div class="t" style="left:1466.50px;top:398.44px;font-size:19.8px;line-height:19.8px;color:#fff;font-weight:400;letter-spacing:0px;-webkit-text-stroke:0.3px #fff;">Athlete</div>
<div style="position:absolute;left:1715px;top:391px;width:135px;height:32px;background:#E9EEF8;border-radius:5px;"></div>
<div class="t" style="left:1721.50px;top:396.91px;font-size:19.6px;line-height:19.6px;color:#3a3a3a;font-weight:400;letter-spacing:0px;-webkit-text-stroke:0.2px #3a3a3a;">Feature Alpha</div>
<div style="position:absolute;left:503px;top:514px;width:1440px;height:129px;background:#fff;"></div>
<div style="position:absolute;left:503px;top:642px;width:1440px;height:1px;background:#E8E8E8;"></div>
<div class="t" style="left:522.50px;top:528.46px;font-size:18px;line-height:18px;color:#777;font-weight:400;letter-spacing:0px;">2</div>
<div class="t" style="left:610.50px;top:526.99px;font-size:20.1px;line-height:20.1px;color:#333;font-weight:400;letter-spacing:0px;-webkit-text-stroke:0.25px #333;">I want to be able to connect with athletes for questions and</div>
<div class="t" style="left:610.50px;top:554.99px;font-size:20.1px;line-height:20.1px;color:#333;font-weight:400;letter-spacing:0px;-webkit-text-stroke:0.25px #333;">feedback between sessions</div>
<div style="position:absolute;left:1190px;top:523px;width:169px;height:26.5px;background:#A3C7FE;border-radius:13.25px;"></div>
<svg style="position:absolute;left:1205px;top:525px;" width="15" height="23" viewBox="0 0 15 23"><ellipse cx="7.5" cy="8" rx="6.5" ry="7" fill="#FCEFA7"/><ellipse cx="6" cy="6.5" rx="3" ry="3.5" fill="#FFF9D9"/><rect x="4.5" y="15" width="6" height="5" rx="1" fill="#999"/><rect x="5.5" y="20" width="4" height="2" rx="1" fill="#777"/></svg>
<div class="t" style="left:1226.00px;top:527.69px;font-size:19.5px;line-height:19.5px;color:#102A50;font-weight:400;letter-spacing:0px;-webkit-text-stroke:0.2px #102A50;">Idea / Feature</div>
<div style="position:absolute;left:1454px;top:523px;width:85px;height:26.5px;background:#18BFFF;border-radius:13.25px;"></div>
<div class="t" style="left:1466.00px;top:527.44px;font-size:19.8px;line-height:19.8px;color:#fff;font-weight:400;letter-spacing:0px;-webkit-text-stroke:0.3px #fff;">Trainer</div>
<div style="position:absolute;left:1715px;top:520px;width:147px;height:32px;background:#E9EEF8;border-radius:5px;"></div>
<div class="t" style="left:1721.50px;top:525.91px;font-size:19.6px;line-height:19.6px;color:#3a3a3a;font-weight:400;letter-spacing:0px;-webkit-text-stroke:0.2px #3a3a3a;">Feature Charlie</div>
<div style="position:absolute;left:501.5px;top:713px;width:1500px;height:634px;background:#F6F6F6;border:1.8px solid #D3D3D3;border-radius:8px;box-sizing:border-box;"></div>
<div class="t" style="left:555.00px;top:332.15px;font-size:1px;line-height:1px;color:#333;font-weight:400;letter-spacing:0px;"></div>
<div class="t" style="left:555.00px;top:721.13px;font-size:13.2px;line-height:13.2px;color:#7a7a7a;font-weight:700;letter-spacing:1.25px;">SOURCE</div>
<svg style="position:absolute;left:521px;top:744px;" width="15" height="11" viewBox="0 0 15 11"><path d="M0 0 L15 0 L7.5 11 Z" fill="#444"/></svg>
<div style="position:absolute;left:555px;top:744px;width:173px;height:32px;background:#FFEAB6;border-radius:16px;"></div>
<div class="t" style="left:567.00px;top:748.72px;font-size:21px;line-height:21px;color:#111;font-weight:400;letter-spacing:0px;-webkit-text-stroke:0.3px #111;">Feedback Form</div>
<div class="t" style="left:1097.00px;top:740.95px;font-size:16.6px;line-height:16.6px;color:#777;font-weight:400;letter-spacing:0px;-webkit-text-stroke:0.25px #777;">Count</div>
<div class="t" style="left:1149.00px;top:738.99px;font-size:19.5px;line-height:19.5px;color:#333;font-weight:400;letter-spacing:0px;-webkit-text-stroke:0.35px #333;">5</div>
<div style="position:absolute;left:503px;top:783px;width:1440px;height:1px;background:#DEDEDE;"></div>
<div style="position:absolute;left:503px;top:784px;width:1440px;height:129px;background:#fff;"></div>
<div style="position:absolute;left:503px;top:912px;width:1440px;height:1px;background:#E8E8E8;"></div>
<div class="t" style="left:522.50px;top:798.46px;font-size:18px;line-height:18px;color:#777;font-weight:400;letter-spacing:0px;">3</div>
<div class="t" style="left:610.50px;top:796.99px;font-size:20.1px;line-height:20.1px;color:#333;font-weight:400;letter-spacing:0px;-webkit-text-stroke:0.25px #333;">I want to be able to issue promo codes to friends and family</div>
<div style="position:absolute;left:1190px;top:793px;width:169px;height:26.5px;background:#A3C7FE;border-radius:13.25px;"></div>
<svg style="position:absolute;left:1205px;top:795px;" width="15" height="23" viewBox="0 0 15 23"><ellipse cx="7.5" cy="8" rx="6.5" ry="7" fill="#FCEFA7"/><ellipse cx="6" cy="6.5" rx="3" ry="3.5" fill="#FFF9D9"/><rect x="4.5" y="15" width="6" height="5" rx="1" fill="#999"/><rect x="5.5" y="20" width="4" height="2" rx="1" fill="#777"/></svg>
<div class="t" style="left:1226.00px;top:797.69px;font-size:19.5px;line-height:19.5px;color:#102A50;font-weight:400;letter-spacing:0px;-webkit-text-stroke:0.2px #102A50;">Idea / Feature</div>
<div style="position:absolute;left:1454px;top:793px;width:85px;height:26.5px;background:#18BFFF;border-radius:13.25px;"></div>
<div class="t" style="left:1466.00px;top:797.44px;font-size:19.8px;line-height:19.8px;color:#fff;font-weight:400;letter-spacing:0px;-webkit-text-stroke:0.3px #fff;">Trainer</div>
<div style="position:absolute;left:1715px;top:790px;width:135px;height:32px;background:#E9EEF8;border-radius:5px;"></div>
<div class="t" style="left:1721.50px;top:795.91px;font-size:19.6px;line-height:19.6px;color:#3a3a3a;font-weight:400;letter-spacing:0px;-webkit-text-stroke:0.2px #3a3a3a;">Feature Alpha</div>
<div style="position:absolute;left:503px;top:913px;width:1440px;height:129px;background:#fff;"></div>
<div style="position:absolute;left:503px;top:1041px;width:1440px;height:1px;background:#E8E8E8;"></div>
<div class="t" style="left:522.50px;top:927.46px;font-size:18px;line-height:18px;color:#777;font-weight:400;letter-spacing:0px;">4</div>
<div class="t" style="left:610.50px;top:925.99px;font-size:20.1px;line-height:20.1px;color:#333;font-weight:400;letter-spacing:0px;-webkit-text-stroke:0.25px #333;">I want to get credits for referring friends and family</div>
<div style="position:absolute;left:1190px;top:922px;width:169px;height:26.5px;background:#A3C7FE;border-radius:13.25px;"></div>
<svg style="position:absolute;left:1205px;top:924px;" width="15" height="23" viewBox="0 0 15 23"><ellipse cx="7.5" cy="8" rx="6.5" ry="7" fill="#FCEFA7"/><ellipse cx="6" cy="6.5" rx="3" ry="3.5" fill="#FFF9D9"/><rect x="4.5" y="15" width="6" height="5" rx="1" fill="#999"/><rect x="5.5" y="20" width="4" height="2" rx="1" fill="#777"/></svg>
<div class="t" style="left:1226.00px;top:926.69px;font-size:19.5px;line-height:19.5px;color:#102A50;font-weight:400;letter-spacing:0px;-webkit-text-stroke:0.2px #102A50;">Idea / Feature</div>
<div style="position:absolute;left:1454px;top:922px;width:86px;height:26.5px;background:#20C933;border-radius:13.25px;"></div>
<div class="t" style="left:1466.50px;top:926.44px;font-size:19.8px;line-height:19.8px;color:#fff;font-weight:400;letter-spacing:0px;-webkit-text-stroke:0.3px #fff;">Athlete</div>
<div style="position:absolute;left:1715px;top:919px;width:147px;height:32px;background:#E9EEF8;border-radius:5px;"></div>
<div class="t" style="left:1721.50px;top:924.91px;font-size:19.6px;line-height:19.6px;color:#3a3a3a;font-weight:400;letter-spacing:0px;-webkit-text-stroke:0.2px #3a3a3a;">Feature Foxtrot</div>
<div style="position:absolute;left:503px;top:1042px;width:1440px;height:129px;background:#fff;"></div>
<div style="position:absolute;left:503px;top:1170px;width:1440px;height:1px;background:#E8E8E8;"></div>
<div class="t" style="left:522.50px;top:1056.46px;font-size:18px;line-height:18px;color:#777;font-weight:400;letter-spacing:0px;">5</div>
<div class="t" style="left:610.50px;top:1054.99px;font-size:20.1px;line-height:20.1px;color:#333;font-weight:400;letter-spacing:0px;-webkit-text-stroke:0.25px #333;">I want to be able to challenge friends and have a realtime</div>
<div class="t" style="left:610.50px;top:1082.99px;font-size:20.1px;line-height:20.1px;color:#333;font-weight:400;letter-spacing:0px;-webkit-text-stroke:0.25px #333;">leaderboard</div>
<div style="position:absolute;left:1190px;top:1051px;width:169px;height:26.5px;background:#A3C7FE;border-radius:13.25px;"></div>
<svg style="position:absolute;left:1205px;top:1053px;" width="15" height="23" viewBox="0 0 15 23"><ellipse cx="7.5" cy="8" rx="6.5" ry="7" fill="#FCEFA7"/><ellipse cx="6" cy="6.5" rx="3" ry="3.5" fill="#FFF9D9"/><rect x="4.5" y="15" width="6" height="5" rx="1" fill="#999"/><rect x="5.5" y="20" width="4" height="2" rx="1" fill="#777"/></svg>
<div class="t" style="left:1226.00px;top:1055.69px;font-size:19.5px;line-height:19.5px;color:#102A50;font-weight:400;letter-spacing:0px;-webkit-text-stroke:0.2px #102A50;">Idea / Feature</div>
<div style="position:absolute;left:1454px;top:1051px;width:86px;height:26.5px;background:#20C933;border-radius:13.25px;"></div>
<div class="t" style="left:1466.50px;top:1055.44px;font-size:19.8px;line-height:19.8px;color:#fff;font-weight:400;letter-spacing:0px;-webkit-text-stroke:0.3px #fff;">Athlete</div>
<div style="position:absolute;left:1715px;top:1048px;width:147px;height:32px;background:#E9EEF8;border-radius:5px;"></div>
<div class="t" style="left:1721.50px;top:1053.91px;font-size:19.6px;line-height:19.6px;color:#3a3a3a;font-weight:400;letter-spacing:0px;-webkit-text-stroke:0.2px #3a3a3a;">Feature Charlie</div>
<div style="position:absolute;left:503px;top:1171px;width:1440px;height:129px;background:#fff;"></div>
<div style="position:absolute;left:503px;top:1299px;width:1440px;height:1px;background:#E8E8E8;"></div>
<div class="t" style="left:522.50px;top:1185.46px;font-size:18px;line-height:18px;color:#777;font-weight:400;letter-spacing:0px;">6</div>
<div class="t" style="left:610.50px;top:1183.99px;font-size:20.1px;line-height:20.1px;color:#333;font-weight:400;letter-spacing:0px;-webkit-text-stroke:0.25px #333;">I want to see my performance vs. my best during my workout</div>
<div style="position:absolute;left:1190px;top:1180px;width:169px;height:26.5px;background:#A3C7FE;border-radius:13.25px;"></div>
<svg style="position:absolute;left:1205px;top:1182px;" width="15" height="23" viewBox="0 0 15 23"><ellipse cx="7.5" cy="8" rx="6.5" ry="7" fill="#FCEFA7"/><ellipse cx="6" cy="6.5" rx="3" ry="3.5" fill="#FFF9D9"/><rect x="4.5" y="15" width="6" height="5" rx="1" fill="#999"/><rect x="5.5" y="20" width="4" height="2" rx="1" fill="#777"/></svg>
<div class="t" style="left:1226.00px;top:1184.69px;font-size:19.5px;line-height:19.5px;color:#102A50;font-weight:400;letter-spacing:0px;-webkit-text-stroke:0.2px #102A50;">Idea / Feature</div>
<div style="position:absolute;left:1454px;top:1180px;width:86px;height:26.5px;background:#20C933;border-radius:13.25px;"></div>
<div class="t" style="left:1466.50px;top:1184.44px;font-size:19.8px;line-height:19.8px;color:#fff;font-weight:400;letter-spacing:0px;-webkit-text-stroke:0.3px #fff;">Athlete</div>
<div style="position:absolute;left:1715px;top:1177px;width:147px;height:32px;background:#E9EEF8;border-radius:5px;"></div>
<div class="t" style="left:1721.50px;top:1182.91px;font-size:19.6px;line-height:19.6px;color:#3a3a3a;font-weight:400;letter-spacing:0px;-webkit-text-stroke:0.2px #3a3a3a;">Feature Charlie</div>
<div style="position:absolute;left:1180px;top:290px;width:1.2px;height:966px;background:#D2D2D2;"></div>
<div style="position:absolute;left:1444px;top:290px;width:1px;height:966px;background:#EDEDED;"></div>
<div style="position:absolute;left:479.5px;top:1256px;width:1445px;height:44px;background:#F5F5F5;"></div>
<div style="position:absolute;left:479.5px;top:1256px;width:1445px;height:1px;background:#DADADA;"></div>
<div style="position:absolute;left:1180px;top:1256px;width:1.2px;height:44px;background:#D2D2D2;"></div>
<div style="position:absolute;left:491px;top:1240px;width:44px;height:44px;background:#F7F7F7;border:1px solid #DDD;border-radius:50%;box-sizing:border-box;"></div>
<svg style="position:absolute;left:507px;top:1254px;" width="12" height="17" viewBox="0 0 12 17"><path d="M8 0 L1 9 L5 9 L3.5 17 L11 7 L7 7 L9 0 Z" fill="#666"/></svg>
<div class="t" style="left:546.50px;top:1267.91px;font-size:17px;line-height:17px;color:#444;font-weight:400;letter-spacing:0px;-webkit-text-stroke:0.3px #444;">12 records</div>
<div style="position:absolute;left:484px;top:1290px;width:554px;height:10px;background:#C4C4C4;border-radius:5px;"></div>
<div style="position:absolute;left:1698px;top:240px;width:226px;height:1018px;border:8px solid #3BBE45;border-radius:19px;box-sizing:border-box;box-shadow:0 4px 6px -2px rgba(0,0,0,0.14);"></div>
</div></div>
</body></html>
